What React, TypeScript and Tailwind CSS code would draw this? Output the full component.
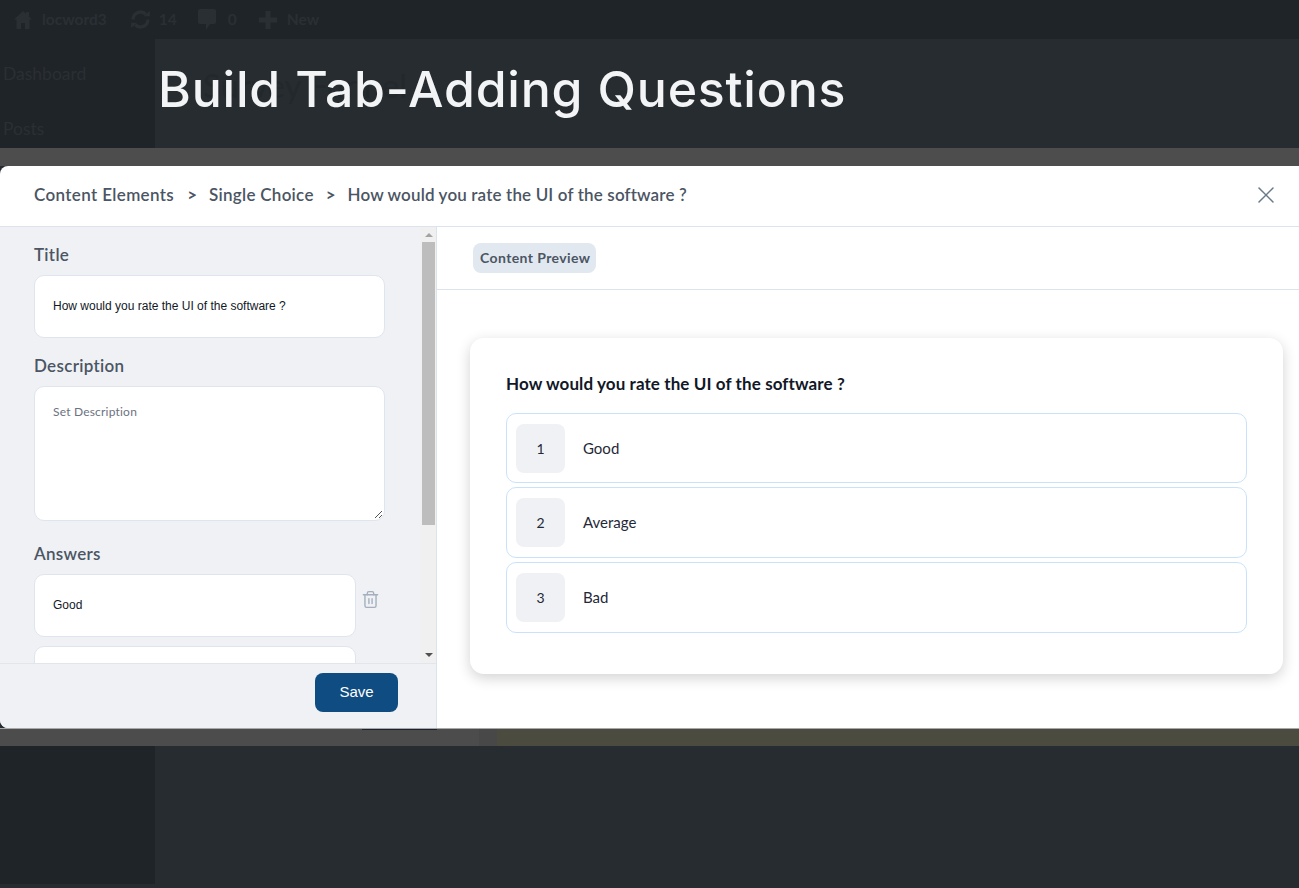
import React from 'react';
import { X, Trash2 } from 'lucide-react';

const sans = "font-['Lato','Noto_Sans',sans-serif]";
const arial = "font-['Liberation_Sans',Arial,sans-serif]";

const options = [
  { id: 1, label: 'Good', height: 'h-[70px]' },
  { id: 2, label: 'Average', height: 'h-[71px]' },
  { id: 3, label: 'Bad', height: 'h-[71px]' },
];

const AdminBar = () => (
  <div className={`h-[39px] bg-[#1f2428] flex items-center pl-[13px] text-[#2a2f34] text-[15.5px] font-bold ${sans}`}>
    <svg className="w-[20px] h-[20px]" viewBox="0 0 20 20" fill="#2a2f34">
      <path d="M10 1 1 9.5h2.5V19H8v-6h4v6h4.5V9.5H19l-3-2.9V2h-3v1.8z" />
    </svg>
    <span className="ml-[9px]">locword3</span>
    <svg className="w-[21px] h-[21px] ml-[23px]" viewBox="0 0 20 20" fill="none" stroke="#2a2f34" strokeWidth="3.2">
      <path d="M3 10a7 7 0 0 1 12-5" />
      <path d="M17 10a7 7 0 0 1-12 5" />
      <path d="M13 7h6V2zM7 13H1v5z" fill="#2a2f34" stroke="none" />
    </svg>
    <span className="ml-[8px]">14</span>
    <svg className="w-[18px] h-[21px] ml-[21px]" viewBox="0 0 18 21" fill="#2a2f34">
      <path d="M2 0h14a2 2 0 0 1 2 2v11a2 2 0 0 1-2 2h-4l-4 6v-6H2a2 2 0 0 1-2-2V2a2 2 0 0 1 2-2z" />
    </svg>
    <span className="ml-[12px]">0</span>
    <svg className="w-[18px] h-[18px] ml-[22px]" viewBox="0 0 18 18" fill="#2a2f34">
      <path d="M6.5 0h5v6.5H18v5h-6.5V18h-5v-6.5H0v-5h6.5z" />
    </svg>
    <span className="ml-[10px]">New</span>
  </div>
);

const Label = ({ children }: { children: React.ReactNode }) => (
  <div className="text-[17px] leading-[20px] font-semibold text-[#4b5563] tracking-[0.3px]">{children}</div>
);

export default function App() {
  return (
    <div className={`w-[1299px] h-[888px] overflow-hidden bg-[#272c30] flex flex-col ${sans}`}>
      <AdminBar />

      <div className="h-[109px] flex">
        <div className="w-[155px] bg-[#1f2428] text-[#2a2f34] text-[17.5px] pl-[3px] pt-[24px]">
          <div className="leading-[22px]">Dashboard</div>
          <div className="mt-[33px] leading-[22px]">Posts</div>
        </div>
        <div className="relative flex-1 pt-[21px] pl-[3px]">
          <div className="absolute left-[48px] top-[24px] text-[33px] leading-[44px] text-[#23282c]">Survey Funnel</div>
          <h1 className="relative font-['Inter',sans-serif] text-[50px] leading-[58px] font-medium tracking-[0.8px] text-[#f3f4f6]">
            Build Tab-Adding Questions
          </h1>
        </div>
      </div>

      <div className="h-[18px] bg-[#4d4d4d]" />

      <div className="h-[562px] flex flex-col bg-white rounded-l-[8px] overflow-hidden">
        <div className="h-[61px] shrink-0 flex items-center justify-between pl-[34px] pr-[19px] border-b border-[#dbe3ec] pb-[2px] text-[17px] font-semibold text-[#4b5563]">
          <div className="flex items-center">
            <span className="tracking-[0.36px]">Content Elements</span>
            <span className="ml-[13px] font-bold">&gt;</span>
            <span className="ml-[12px] tracking-[0.28px]">Single Choice</span>
            <span className="ml-[12px] font-bold">&gt;</span>
            <span className="ml-[12px] tracking-[0.15px]">How would you rate the UI of the software ?</span>
          </div>
          <X className="w-[28px] h-[28px] text-[#6b7a89]" strokeWidth={1.3} />
        </div>

        <div className="flex-1 flex min-h-0">
          <div className="w-[437px] shrink-0 bg-[#eff1f5] border-r border-[#dbe3ec] flex flex-col">
            <div className="h-[437px] flex overflow-hidden border-b border-[#e2e6ec]">
              <div className="flex-1 pl-[34px] pt-[18px] overflow-hidden">
                <Label>Title</Label>
                <div className={`mt-[10px] w-[351px] h-[63px] pb-[2px] bg-white rounded-[10px] border border-[#dfe5ee] pl-[18px] flex items-center text-[12px] text-[#111827] ${arial}`}>
                  How would you rate the UI of the software ?
                </div>
                <div className="mt-[18px]">
                  <Label>Description</Label>
                  <div className="relative mt-[10px] w-[351px] h-[135px] bg-white rounded-[10px] border border-[#dfe5ee] pl-[18px] pt-[16px] text-[12px] tracking-[0.2px] text-[#6b7280]">
                    Set Description
                    <svg className="absolute right-[1px] bottom-[1px] w-[9px] h-[9px]" viewBox="0 0 9 9" stroke="#555" fill="none">
                      <path d="M8 1 1 8M8 5 5 8" />
                    </svg>
                  </div>
                </div>
                <div className="mt-[23px]">
                  <Label>Answers</Label>
                  <div className="mt-[10px] flex flex-col gap-[9px]">
                    <div className="flex">
                      <div className={`w-[322px] h-[63px] pb-[1px] shrink-0 bg-white rounded-[10px] border border-[#dfe5ee] pl-[18px] flex items-center text-[12px] text-[#111827] ${arial}`}>
                        Good
                      </div>
                      <Trash2 className="w-[19px] h-[19px] ml-[5px] mt-[16px] text-[#a3afbd]" strokeWidth={1.75} />
                    </div>
                    <div className="w-[322px] h-[63px] shrink-0 bg-white rounded-[10px] border border-[#dfe5ee]" />
                  </div>
                </div>
              </div>
              <div className="w-[17px] bg-[#f0f0f0] flex flex-col items-center mr-[-1px]">
                <div className="h-[15px] flex items-center">
                  <div className="w-0 h-0 border-x-[4px] border-x-transparent border-b-[4px] border-b-[#a3a3a3]" />
                </div>
                <div className="w-[13px] h-[283px] bg-[#bdbdbd]" />
                <div className="flex-1 flex items-end pb-[6px]">
                  <div className="w-0 h-0 border-x-[4px] border-x-transparent border-t-[4px] border-t-[#505050]" />
                </div>
              </div>
            </div>
            <div className="flex-1 flex items-start justify-end pt-[9px] pr-[38px]">
              <button className={`w-[83px] h-[39px] bg-[#0f4c81] rounded-[8px] text-white text-[15px] ${arial}`}>Save</button>
            </div>
          </div>

          <div className="flex-1 flex flex-col min-w-0">
            <div className="h-[63px] shrink-0 border-b border-[#dde3ea] pl-[36px] pt-[16px]">
              <span className="inline-flex items-center h-[30px] pb-[1px] pl-[7px] pr-[6px] rounded-[8px] bg-[#e2e8f0] text-[14px] font-bold text-[#4b5563] tracking-[0.4px]">
                Content Preview
              </span>
            </div>
            <div className="flex-1 pl-[33px] pr-[16px] pt-[48px]">
              <div className="h-[336px] rounded-[14px] bg-white shadow-[0_4px_14px_rgba(0,0,0,0.18)] px-[36px] pt-[36px]">
                <div className="text-[17px] leading-[20px] font-bold text-[#111827] tracking-[0.1px]">
                  How would you rate the UI of the software ?
                </div>
                <div className="mt-[19px] flex flex-col gap-[4px]">
                  {options.map((o) => (
                    <div key={o.id} className={`${o.height} rounded-[10px] border border-[#c9e2fb] flex items-center pl-[9px]`}>
                      <div className="w-[49px] h-[49px] rounded-[8px] bg-[#eff1f5] flex items-center justify-center text-[14px] text-[#1f2937]">
                        {o.id}
                      </div>
                      <span className="ml-[18px] text-[15px] text-[#1f2937]">{o.label}</span>
                    </div>
                  ))}
                </div>
              </div>
            </div>
          </div>
        </div>
      </div>

      <div className="h-[18px] flex bg-[#4c4c4c] border-t border-[#a8a8a8]">
        <div className="w-[362px]" />
        <div className="w-[75px] h-[1px] bg-[#1a2130]" />
        <div className="w-[42px]" />
        <div className="w-[18px] bg-[#484848]" />
        <div className="flex-1 bg-[#4c4b3f]" />
      </div>

      <div className="flex-1">
        <div className="w-[155px] h-[138px] bg-[#1f2428]" />
      </div>
    </div>
  );
}
